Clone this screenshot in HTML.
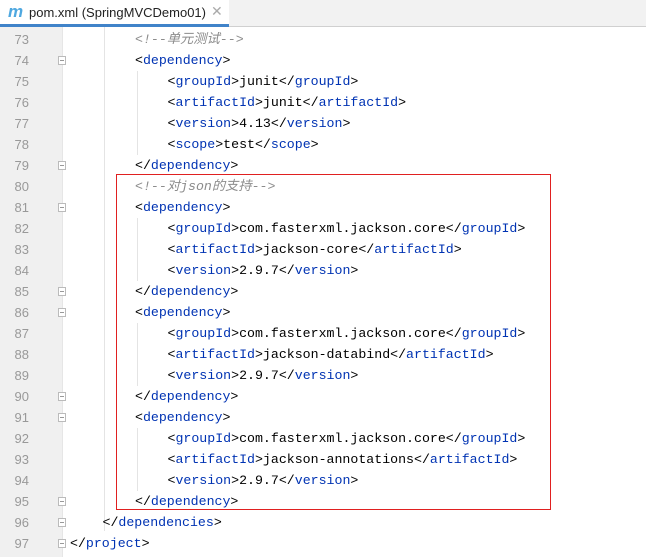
<!DOCTYPE html>
<html><head><style>
body{margin:0;width:646px;height:557px;background:#fff;overflow:hidden;font-family:"Liberation Sans",sans-serif;position:relative}
.tabbar{position:absolute;left:0;top:0;width:646px;height:27px;background:#f2f2f2;border-bottom:1px solid #d0d0d0;box-sizing:border-box}
.tab{position:absolute;left:0;top:0;width:229px;height:27px;background:#fff;border-bottom:3px solid #4083c9;box-sizing:border-box}
.tab .m{position:absolute;left:8px;top:2px;font:italic bold 17px "Liberation Sans",sans-serif;color:#4fa8e0}
.tab .t{position:absolute;left:29px;top:5px;font-size:13px;color:#222}
.tab .x{position:absolute;left:211px;top:3px;font-size:14px;color:#aaa}
.gutter2{position:absolute;left:0;top:27px;width:62px;height:530px;background:#f0f0f0;border-right:1px solid #e6e6e6}
.ln{position:absolute;left:0;width:29px;text-align:right;font:13px "Liberation Sans",sans-serif;color:#999;height:21px;line-height:21px}
.code{position:absolute;left:70px;font:13.25px/21px "Liberation Mono","Noto Sans CJK SC",monospace;white-space:pre;color:#000;height:21px}
.tg{color:#0033b3}
.cm{color:#8c8c8c;font-style:italic}
.fold{position:absolute;left:58px;width:8px;height:9px;border:1px solid #bbb;background:#fff;box-sizing:border-box}
.fold:after{content:"";position:absolute;left:1px;top:3px;width:4px;height:1px;background:#999}
.guide{position:absolute;width:1px;background:#e4e4e4}
.red{position:absolute;left:116px;top:174px;width:435px;height:336px;border:1px solid #e02020;box-sizing:border-box}
</style></head><body>
<div class="tabbar"><div class="tab"><span class="m">m</span><span class="t">pom.xml (SpringMVCDemo01)</span><span class="x">✕</span></div></div>
<div class="gutter2"></div>
<div class="guide" style="left:104px;top:27px;height:504px"></div>
<div class="guide" style="left:137px;top:71px;height:84px"></div>
<div class="guide" style="left:137px;top:218px;height:63px"></div>
<div class="guide" style="left:137px;top:323px;height:63px"></div>
<div class="guide" style="left:137px;top:428px;height:63px"></div>
<div id="lines"></div>
<div class="red"></div>
<script>
var L=[
[4,'<span class="cm">&lt;!--单元测试--&gt;</span>',0],
[4,'&lt;<span class="tg">dependency</span>&gt;',1],
[6,'&lt;<span class="tg">groupId</span>&gt;junit&lt;/<span class="tg">groupId</span>&gt;',0],
[6,'&lt;<span class="tg">artifactId</span>&gt;junit&lt;/<span class="tg">artifactId</span>&gt;',0],
[6,'&lt;<span class="tg">version</span>&gt;4.13&lt;/<span class="tg">version</span>&gt;',0],
[6,'&lt;<span class="tg">scope</span>&gt;test&lt;/<span class="tg">scope</span>&gt;',0],
[4,'&lt;/<span class="tg">dependency</span>&gt;',1],
[4,'<span class="cm">&lt;!--对json的支持--&gt;</span>',0],
[4,'&lt;<span class="tg">dependency</span>&gt;',1],
[6,'&lt;<span class="tg">groupId</span>&gt;com.fasterxml.jackson.core&lt;/<span class="tg">groupId</span>&gt;',0],
[6,'&lt;<span class="tg">artifactId</span>&gt;jackson-core&lt;/<span class="tg">artifactId</span>&gt;',0],
[6,'&lt;<span class="tg">version</span>&gt;2.9.7&lt;/<span class="tg">version</span>&gt;',0],
[4,'&lt;/<span class="tg">dependency</span>&gt;',1],
[4,'&lt;<span class="tg">dependency</span>&gt;',1],
[6,'&lt;<span class="tg">groupId</span>&gt;com.fasterxml.jackson.core&lt;/<span class="tg">groupId</span>&gt;',0],
[6,'&lt;<span class="tg">artifactId</span>&gt;jackson-databind&lt;/<span class="tg">artifactId</span>&gt;',0],
[6,'&lt;<span class="tg">version</span>&gt;2.9.7&lt;/<span class="tg">version</span>&gt;',0],
[4,'&lt;/<span class="tg">dependency</span>&gt;',1],
[4,'&lt;<span class="tg">dependency</span>&gt;',1],
[6,'&lt;<span class="tg">groupId</span>&gt;com.fasterxml.jackson.core&lt;/<span class="tg">groupId</span>&gt;',0],
[6,'&lt;<span class="tg">artifactId</span>&gt;jackson-annotations&lt;/<span class="tg">artifactId</span>&gt;',0],
[6,'&lt;<span class="tg">version</span>&gt;2.9.7&lt;/<span class="tg">version</span>&gt;',0],
[4,'&lt;/<span class="tg">dependency</span>&gt;',1],
[2,'&lt;/<span class="tg">dependencies</span>&gt;',1],
[0,'&lt;/<span class="tg">project</span>&gt;',1]
];
var h='';
for(var i=0;i<L.length;i++){
 var y=29+i*21;
 h+='<div class="ln" style="top:'+y+'px">'+(73+i)+'</div>';
 h+='<div class="code" style="top:'+y+'px;left:'+(70+L[i][0]*16.25)+'px">'+L[i][1]+'</div>';
 if(L[i][2])h+='<div class="fold" style="top:'+(y+6)+'px"></div>';
}
document.getElementById('lines').innerHTML=h;
</script>
</body></html>
